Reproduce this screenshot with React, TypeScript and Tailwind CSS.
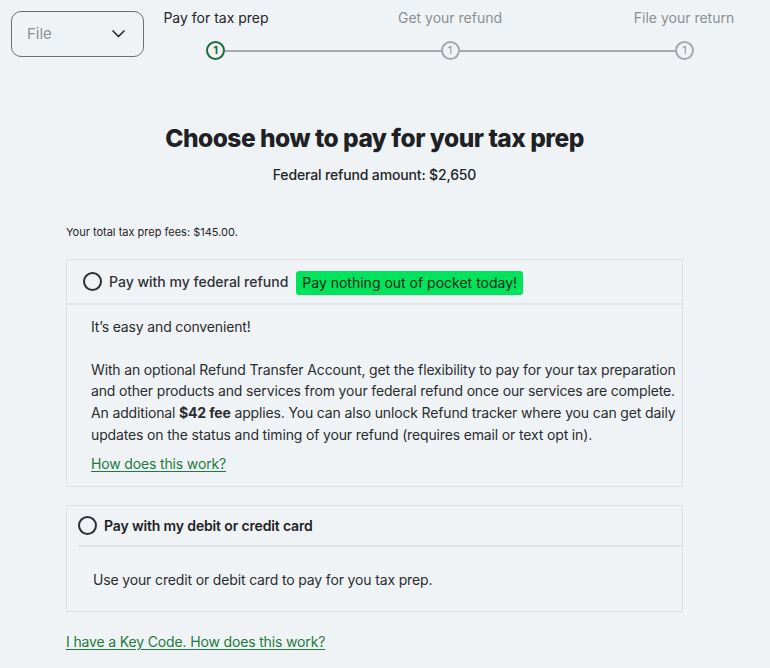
const Radio = ({ className = "" }: { className?: string }) => (
  <span className={`inline-block w-[19px] h-[19px] rounded-full border-2 border-[#2b2f33] shrink-0 ${className}`}></span>
);

const StepCircle = ({ active }: { active?: boolean }) => (
  <span
    className={`flex items-center justify-center w-[19px] h-[19px] rounded-full shrink-0 text-[11px] leading-none ${
      active
        ? "border-[2.5px] border-[#1e6b3c] text-[#1e6b3c] font-bold"
        : "border-2 border-[#a3a8ac] text-[#8f9498]"
    }`}
  >
    1
  </span>
);

const App = () => {
  return (
    <div className="min-h-screen bg-[#f0f3f6] font-['Inter','Liberation_Sans',sans-serif] text-[#2a2d30]">
      {/* top bar: dropdown + stepper */}
      <div className="flex items-start pl-[11px]">
        <div className="mt-[11px] w-[133px] h-[46px] rounded-[10px] border border-[#6b7075] flex items-center justify-between pl-[15px] pr-[18px]">
          <span className="text-[15px] text-[#8c9196]">File</span>
          <svg width="13" height="8" viewBox="0 0 13 8" fill="none">
            <path d="M1 1l5.5 5.5L12 1" stroke="#2b2f33" strokeWidth="1.7" strokeLinecap="round" strokeLinejoin="round" />
          </svg>
        </div>

        <div className="ml-[12px] w-[588px] pt-[8px]">
          <div className="flex justify-between text-[14px] leading-[20px]">
            <span className="w-[120px] text-center text-[#222528]">Pay for tax prep</span>
            <span className="w-[120px] text-center text-[#8a8f94]">Get your refund</span>
            <span className="w-[120px] text-center text-[#8a8f94]">File your return</span>
          </div>
          <div className="flex items-center px-[50px] mt-[13px]">
            <StepCircle active />
            <div className="flex-1 h-[2px] bg-[#a3a8ac]"></div>
            <StepCircle />
            <div className="flex-1 h-[2px] bg-[#a3a8ac]"></div>
            <StepCircle />
          </div>
        </div>
      </div>

      {/* main content */}
      <div className="ml-[66px] w-[617px] pt-[62px] tracking-[-0.15px]">
        <h1 className="text-center text-[24.5px] leading-[32px] font-extrabold tracking-[-0.5px] text-[#1f2225]">
          Choose how to pay for your tax prep
        </h1>
        <p className="mt-[11px] text-center text-[14px] leading-[20px] font-medium text-[#222528]">
          Federal refund amount: $2,650
        </p>

        <p className="mt-[40px] text-[11px] leading-[14px] tracking-normal text-[#222528]">
          Your total tax prep fees: $145.00.
        </p>

        {/* option 1 */}
        <div className="mt-[20px] border border-[#dde1e4]">
          <div className="flex items-center h-[45px] pl-[16px] border-b-2 border-[#e1e5e8] tracking-normal">
            <Radio />
            <span className="ml-[7px] text-[14px] font-medium text-[#2f3236]">Pay with my federal refund</span>
            <span className="ml-[8px] mt-[2px] h-[24px] flex items-center px-[6px] rounded-[3px] bg-[#00e35a] text-[14px] text-[#1b2a20]">
              Pay nothing out of pocket today!
            </span>
          </div>
          <div className="pl-[24px] pr-[2px] pt-[11px] pb-[12px] text-[14px] leading-[21.7px] text-[#2a2d30]">
            <p className="mb-[21px]">It’s easy and convenient!</p>
            <p>
              With an optional Refund Transfer Account, get the flexibility to pay for your tax preparation and other
              products and services from your federal refund once our services are complete. An additional{" "}
              <span className="font-bold">$42 fee</span> applies. You can also unlock Refund tracker where you can get daily
              updates on the status and timing of your refund (requires email or text opt in).
            </p>
            <a href="#" className="inline-block mt-[7px] text-[#1e7a3e] underline underline-offset-2">
              How does this work?
            </a>
          </div>
        </div>

        {/* option 2 */}
        <div className="mt-[18px] border border-[#dde1e4]">
          <div className="ml-[11px] flex items-center h-[41px] border-b-2 border-[#e1e5e8]">
            <Radio />
            <span className="ml-[7px] text-[14px] font-semibold text-[#1f2225]">Pay with my debit or credit card</span>
          </div>
          <div className="pl-[26px] pt-[22px] pb-[20px] text-[14px] leading-[22px] text-[#2a2d30]">
            Use your credit or debit card to pay for you tax prep.
          </div>
        </div>

        <a href="#" className="inline-block mt-[19px] text-[14px] leading-[22px] text-[#1e7a3e] underline underline-offset-2">
          I have a Key Code. How does this work?
        </a>
      </div>
    </div>
  );
};

export default App;
